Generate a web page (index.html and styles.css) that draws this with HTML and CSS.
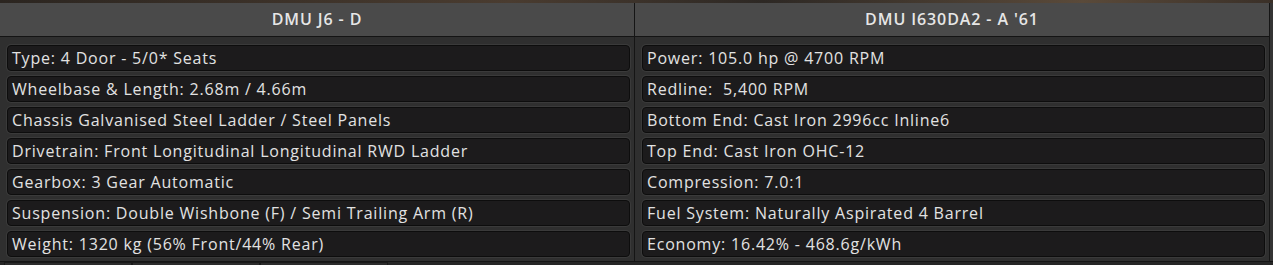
FILE: index.html
```html
<!DOCTYPE html>
<html lang="en">
<head>
  <meta charset="UTF-8">
  <title>Car Comparison</title>
  <link rel="stylesheet" href="styles.css">
</head>
<body>
  <div class="backdrop"></div>
  <div class="compare">
    <!-- Car body / trim -->
    <section class="col">
      <header class="col-head">DMU J6 - D</header>
      <div class="col-body">
        <div class="stat">Type: 4 Door - 5/0* Seats</div>
        <div class="stat">Wheelbase &amp; Length: 2.68m / 4.66m</div>
        <div class="stat">Chassis Galvanised Steel Ladder / Steel Panels</div>
        <div class="stat">Drivetrain: Front Longitudinal Longitudinal RWD Ladder</div>
        <div class="stat">Gearbox: 3 Gear Automatic</div>
        <div class="stat">Suspension: Double Wishbone (F) / Semi Trailing Arm (R)</div>
        <div class="stat">Weight: 1320 kg (56% Front/44% Rear)</div>
      </div>
    </section>
    <!-- Engine -->
    <section class="col">
      <header class="col-head">DMU I630DA2 - A '61</header>
      <div class="col-body">
        <div class="stat">Power: 105.0 hp @ 4700 RPM</div>
        <div class="stat">Redline:&nbsp; 5,400 RPM</div>
        <div class="stat">Bottom End: Cast Iron 2996cc Inline6</div>
        <div class="stat">Top End: Cast Iron OHC-12</div>
        <div class="stat">Compression: 7.0:1</div>
        <div class="stat">Fuel System: Naturally Aspirated 4 Barrel</div>
        <div class="stat">Economy: 16.42% - 468.6g/kWh</div>
      </div>
    </section>
    <div class="edge"></div>
  </div>
  <div class="tabs">
    <span class="tab"></span>
    <span class="tab"></span>
    <span class="tab"></span>
  </div>
</body>
</html>
```

FILE: styles.css
```css
body {
  margin: 0;
  width: 1273px;
  height: 265px;
  overflow: hidden;
  background-color: #262626;
  font-family: "Open Sans", "DejaVu Sans", sans-serif;
  color: #e2e2e2;
}
.backdrop {
  height: 3px;
  background: linear-gradient(90deg, #2b2520 0%, #4a3c30 40%, #2d2824 60%, #5a4a3a 85%, #3a3028 100%);
}
.compare {
  display: flex;
  background-color: #2f2f2f;
  border-bottom: 1px solid #151515;
}
.col {
  width: 634px;
  border-right: 1px solid #151515;
}
.col-head {
  height: 33px;
  line-height: 33px;
  text-align: center;
  background-color: #4a4a4a;
  border-bottom: 1px solid #141414;
  font-size: 16px;
  font-weight: 600;
  letter-spacing: 0.9px;
  color: #e6e6e6;
}
.col-body {
  display: flex;
  flex-direction: column;
  gap: 5px;
  padding: 8px 4px 4px 7px;
}
.stat {
  height: 24px;
  line-height: 24px;
  padding-left: 4px;
  background-color: #1c1b1c;
  border: 1px solid #0d0d0d;
  border-radius: 4px;
  box-shadow: 0 0 0 1px #3a3a3a;
  font-size: 16px;
  letter-spacing: 0.8px;
  white-space: nowrap;
}
.edge {
  flex: 1;
  background-color: #343434;
}
.tabs {
  display: flex;
  height: 6px;
  padding-left: 4px;
}
.tab {
  width: 126px;
  border: 1px solid #1a1a1a;
  border-bottom: none;
  background-color: #2c2c2c;
}
```
